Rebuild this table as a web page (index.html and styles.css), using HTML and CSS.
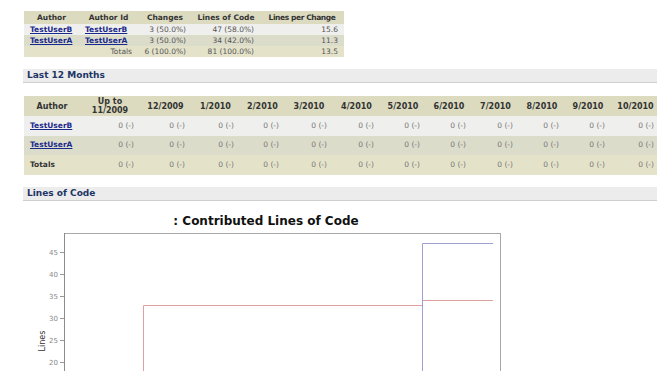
FILE: index.html
```html
<!DOCTYPE html>
<html>
<head>
<meta charset="utf-8">
<link rel="stylesheet" href="styles.css">
</head>
<body>
<div class="page">
  <table class="data summary">
    <colgroup><col style="width:55px"><col style="width:59px"><col style="width:54px"><col style="width:68px"><col style="width:84px"></colgroup>
    <thead>
      <tr><th>Author</th><th>Author Id</th><th>Changes</th><th>Lines of Code</th><th>Lines per Change</th></tr>
    </thead>
    <tbody>
      <tr class="odd"><td class="l"><a href="#">TestUserB</a></td><td class="l"><a href="#">TestUserB</a></td><td>3 (50.0%)</td><td>47 (58.0%)</td><td>15.6</td></tr>
      <tr class="even"><td class="l"><a href="#">TestUserA</a></td><td class="l"><a href="#">TestUserA</a></td><td>3 (50.0%)</td><td>34 (42.0%)</td><td>11.3</td></tr>
      <tr class="total"><td></td><td>Totals</td><td>6 (100.0%)</td><td>81 (100.0%)</td><td>13.5</td></tr>
    </tbody>
  </table>

  <h2 class="section">Last 12 Months</h2>

  <div class="wide">
  <table class="data months">
    <colgroup><col style="width:56px"><col style="width:60px"><col style="width:51px"><col style="width:49px"><col style="width:45px"><col style="width:48px"><col style="width:47px"><col style="width:46px"><col style="width:46px"><col style="width:47px"><col style="width:46px"><col style="width:46px"><col style="width:49px"></colgroup>
    <thead>
      <tr><th>Author</th><th>Up to<br>11/2009</th><th>12/2009</th><th>1/2010</th><th>2/2010</th><th>3/2010</th><th>4/2010</th><th>5/2010</th><th>6/2010</th><th>7/2010</th><th>8/2010</th><th>9/2010</th><th>10/2010</th></tr>
    </thead>
    <tbody>
      <tr class="odd"><td class="l"><a href="#">TestUserB</a></td><td>0 (-)</td><td>0 (-)</td><td>0 (-)</td><td>0 (-)</td><td>0 (-)</td><td>0 (-)</td><td>0 (-)</td><td>0 (-)</td><td>0 (-)</td><td>0 (-)</td><td>0 (-)</td><td>0 (-)</td></tr>
      <tr class="even"><td class="l"><a href="#">TestUserA</a></td><td>0 (-)</td><td>0 (-)</td><td>0 (-)</td><td>0 (-)</td><td>0 (-)</td><td>0 (-)</td><td>0 (-)</td><td>0 (-)</td><td>0 (-)</td><td>0 (-)</td><td>0 (-)</td><td>0 (-)</td></tr>
      <tr class="total"><td class="l tl">Totals</td><td>0 (-)</td><td>0 (-)</td><td>0 (-)</td><td>0 (-)</td><td>0 (-)</td><td>0 (-)</td><td>0 (-)</td><td>0 (-)</td><td>0 (-)</td><td>0 (-)</td><td>0 (-)</td><td>0 (-)</td></tr>
    </tbody>
  </table>
  </div>

  <h2 class="section">Lines of Code</h2>

  <svg class="chart" width="520" height="160" viewBox="0 7 520 160">
    <text class="title" x="243" y="18" text-anchor="middle">: Contributed Lines of Code</text>
    <rect x="41.5" y="26.5" width="436" height="200" fill="#fff" stroke="#a8a8a8"/>
    <line x1="41.5" y1="26" x2="41.5" y2="170" stroke="#8c8c8c"/>
    <g class="ticks" stroke="#999">
      <line x1="37" y1="45.5" x2="41" y2="45.5"/>
      <line x1="37" y1="67.5" x2="41" y2="67.5"/>
      <line x1="37" y1="89.5" x2="41" y2="89.5"/>
      <line x1="37" y1="111.5" x2="41" y2="111.5"/>
      <line x1="37" y1="133.5" x2="41" y2="133.5"/>
      <line x1="37" y1="155.5" x2="41" y2="155.5"/>
    </g>
    <g class="ylab" text-anchor="end">
      <text x="35" y="48">45</text>
      <text x="35" y="70">40</text>
      <text x="35" y="92">35</text>
      <text x="35" y="114">30</text>
      <text x="35" y="136">25</text>
      <text x="35" y="158">20</text>
    </g>
    <text class="axis" transform="translate(22 134) rotate(-90)" text-anchor="middle">Lines</text>
    <polyline points="120.5,170 120.5,98.5 399.5,98.5 399.5,93.5 470,93.5" fill="none" stroke="#e0a0a0"/>
    <polyline points="399.5,170 399.5,36.5 470,36.5" fill="none" stroke="#a0a0d0"/>
  </svg>
</div>
</body>
</html>
```
FILE: styles.css
```css
html, body {
  margin: 0;
  padding: 0;
  background: #fff;
  overflow: hidden;
}
body {
  font-family: "DejaVu Sans", Verdana, sans-serif;
  font-size: 7.5px;
  color: #555;
}
.page {
  padding: 11px 0 0 23px;
}
.data {
  border-collapse: collapse;
  table-layout: fixed;
  margin-left: 1px;
}
.data th {
  background: #dcdbc0;
  color: #333;
  font-weight: bold;
  text-align: center;
  padding: 0;
  white-space: nowrap;
  overflow: hidden;
}
.data td {
  text-align: right;
  padding: 0 6px 0 3px;
  white-space: nowrap;
}
.data td.l {
  text-align: left;
  padding-left: 6px;
}
.data a {
  color: #1a2a8c;
  font-weight: bold;
  text-decoration: underline;
}
.odd td { background: #efefed; }
.even td { background: #dcdccb; }
.total td { background: #e4e3ca; }

.summary { width: 320px; }
.summary th { height: 13px; line-height: 13px; }
.summary th:last-child { letter-spacing: -0.4px; }
.summary td { height: 11px; line-height: 11px; }

.section {
  margin: 12px 0 13px 0;
  height: 13px;
  line-height: 13px;
  padding: 0 4px;
  background: #ececec;
  border-bottom: 1px solid #cfcfcf;
  color: #1c3566;
  font-size: 9px;
  font-weight: bold;
}
.wide {
  width: 700px;
}
.months { width: 636px; }
.months th { height: 20px; line-height: 9px; font-size: 8px; box-sizing: border-box; }
.months td { height: 19.5px; line-height: 18px; color: #777; box-sizing: border-box; }
.months td.tl { color: #333; font-weight: bold; }

.chart {
  display: block;
}
.chart .title {
  font-family: "DejaVu Sans", Verdana, sans-serif;
  font-size: 12px;
  font-weight: bold;
  fill: #111;
}
.chart .ylab text {
  font-family: "DejaVu Sans", sans-serif;
  font-size: 7px;
  fill: #888;
}
.chart .axis {
  font-family: "DejaVu Sans", sans-serif;
  font-size: 8px;
  fill: #333;
}
```
